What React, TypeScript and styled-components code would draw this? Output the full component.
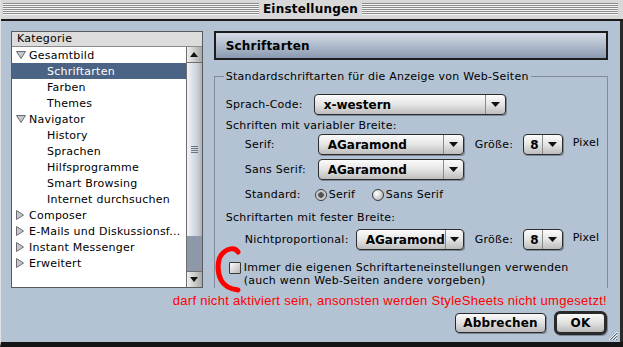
import styled, { createGlobalStyle } from 'styled-components';

const GlobalStyle = createGlobalStyle`
  html, body {
    margin: 0;
    padding: 0;
    background: #b3c3d4;
  }
  * { box-sizing: border-box; }
`;

const uiFont = `"DejaVu Sans", "Noto Sans", sans-serif`;

const Window = styled.div`
  width: 623px;
  height: 347px;
  overflow: hidden;
  position: relative;
  display: flex;
  flex-direction: column;
  background: #b3c3d4;
  border-left: 1px solid #e2e2e2;
  border-bottom: 5px solid #151515;
  font-family: ${uiFont};
  font-size: 11px;
  letter-spacing: 0.25px;
  color: #000;
`;

const TitleBar = styled.div`
  height: 21px;
  flex-shrink: 0;
  display: flex;
  align-items: center;
  padding: 0 5px 2px 2px;
  background: #d8d8d8;
  border-bottom: 2px solid #1a1a1a;
`;

const Stripes = styled.div`
  flex: 1;
  height: 12px;
  background: repeating-linear-gradient(to bottom, #8a8a8a 0 1px, #f6f6f6 1px 2px);
`;

const Title = styled.div`
  padding: 0 4px;
  font-weight: bold;
  font-size: 12px;
  letter-spacing: 0.2px;
`;

const Body = styled.div`
  flex: 1;
  display: flex;
  flex-direction: column;
  padding: 10px 12px 0 10px;
  border-right: 3px solid #2a2a2a;
`;

const MainRow = styled.div`
  display: flex;
  gap: 11px;
  height: 257px;
`;

const ListBox = styled.div`
  width: 192px;
  display: flex;
  flex-direction: column;
  border: 1px solid #5a5a5a;
  background: #fff;
`;

const ListHeader = styled.div`
  height: 15px;
  line-height: 14px;
  padding-left: 5px;
  background: #dcdcdc;
  border-bottom: 1px solid #8a8a8a;
`;

const ListArea = styled.div`
  flex: 1;
  display: flex;
`;

const Rows = styled.div`
  flex: 1;
  min-width: 0;
`;

const Row = styled.div<{ $level: number; $selected?: boolean }>`
  height: 16px;
  display: flex;
  align-items: center;
  padding-left: ${p => (p.$level === 0 ? 4 : 35)}px;
  background: ${p => (p.$selected ? '#4b6384' : 'transparent')};
  color: ${p => (p.$selected ? '#fff' : '#000')};
  white-space: nowrap;
  overflow: hidden;
`;

const Twisty = styled.span`
  width: 13px;
  flex-shrink: 0;
  display: inline-flex;
  justify-content: flex-start;
`;

const ScrollBar = styled.div`
  width: 16px;
  flex-shrink: 0;
  display: flex;
  flex-direction: column;
  border-left: 1px solid #6e6e6e;
`;

const ArrowBox = styled.div<{ $edge: 'top' | 'bottom' }>`
  height: 16px;
  display: flex;
  align-items: center;
  justify-content: center;
  background: linear-gradient(to right, #f0f0f0, #a8a8a8);
  border-${p => (p.$edge === 'top' ? 'bottom' : 'top')}: 1px solid #6e6e6e;
`;

const Thumb = styled.div`
  flex: 0 0 173px;
  display: flex;
  align-items: center;
  justify-content: center;
  background: linear-gradient(to right, #f2f4f7, #c9d0d9 70%, #a9b2bd);
`;

const Track = styled.div`
  flex: 1;
  background: #8d99a8;
`;

const Grip = styled.div`
  width: 7px;
  height: 7px;
  background: repeating-linear-gradient(to bottom, #6b7684 0 1px, transparent 1px 2px);
`;

const RightCol = styled.div`
  width: 395px;
  display: flex;
  flex-direction: column;
  gap: 10px;
`;

const PanelHeader = styled.div`
  height: 29px;
  display: flex;
  align-items: center;
  padding-left: 10px;
  font-size: 12px;
  font-weight: bold;
  letter-spacing: 0.2px;
  border: 2px solid #1c1c1c;
  background: linear-gradient(to bottom, #d3dbe6 0%, #b7c2d1 40%, #8a99b1 100%);
`;

const Group = styled.fieldset`
  flex: 1;
  margin: 0;
  padding: 0;
  min-width: 0;
  border: 1px solid #7f8c9b;
  border-bottom: none;
`;

const Legend = styled.legend`
  margin-left: 9px;
  padding: 0 2px;
  line-height: 13px;
`;

const GroupInner = styled.div`
  padding: 11px 0 0 11px;
  display: flex;
  flex-direction: column;
`;

const FieldRow = styled.div<{ $top: number; $indent?: number }>`
  display: flex;
  align-items: center;
  height: 21px;
  margin-top: ${p => p.$top}px;
  padding-left: ${p => p.$indent ?? 0}px;
  white-space: nowrap;
`;

const Label = styled.span<{ $width: number }>`
  width: ${p => p.$width}px;
  flex-shrink: 0;
`;

const SubHead = styled.div<{ $top: number }>`
  line-height: 14px;
  margin-top: ${p => p.$top}px;
`;

const Select = styled.div<{ $width: number }>`
  width: ${p => p.$width}px;
  height: 21px;
  flex-shrink: 0;
  display: flex;
  border: 1px solid #2c2c2c;
  border-radius: 4px;
  background: linear-gradient(to bottom, #fbfbfb, #e4e4e4 50%, #bdbdbd);
  box-shadow: 1px 1px 0 #7d8896;
  overflow: hidden;
`;

const SelectText = styled.div<{ $right?: boolean }>`
  flex: 1;
  display: flex;
  align-items: center;
  justify-content: ${p => (p.$right ? 'flex-end' : 'flex-start')};
  padding: ${p => (p.$right ? '0 3px 0 0' : '0 0 0 9px')};
  font-weight: bold;
  font-size: 12px;
  letter-spacing: 0;
`;

const SelectArrow = styled.div`
  width: 20px;
  display: flex;
  align-items: center;
  justify-content: center;
  border-left: 1px solid #8a8a8a;
`;

const SizeLabel = styled.span`
  width: 37px;
  flex-shrink: 0;
  margin: 0 11px;
`;

const PixelLabel = styled.span`
  margin-left: 10px;
  align-self: flex-start;
  margin-top: 2px;
`;

const RadioItem = styled.span<{ $width?: number }>`
  display: inline-flex;
  align-items: center;
  width: ${p => (p.$width ? `${p.$width}px` : 'auto')};
`;

const Radio = styled.span<{ $checked?: boolean }>`
  width: 12px;
  height: 12px;
  border-radius: 50%;
  border: 1px solid #3a3a3a;
  background: ${p =>
    p.$checked
      ? 'radial-gradient(circle, #555 0 2.5px, #b8b8b8 3px, #efefef 6px)'
      : 'radial-gradient(circle at 35% 35%, #ffffff, #c4c4c4 70%, #9a9a9a)'};
  margin-right: 2px;
  flex-shrink: 0;
`;

const CheckRow = styled.div`
  display: flex;
  align-items: flex-start;
  margin-top: 11px;
  padding-left: 3px;
  line-height: 13px;
  white-space: nowrap;
`;

const CheckBox = styled.span`
  width: 12px;
  height: 12px;
  margin-top: 1px;
  margin-right: 3px;
  border: 1px solid #3a3a3a;
  border-radius: 1px;
  background: linear-gradient(135deg, #fafafa, #b8b8b8);
  flex-shrink: 0;
`;

const Note = styled.div`
  margin-top: 5px;
  height: 15px;
  line-height: 15px;
  text-align: right;
  padding-right: 1px;
  font-family: "Liberation Sans", Arial, sans-serif;
  font-size: 13px;
  letter-spacing: 0.28px;
  color: #ff0000;
  white-space: nowrap;
`;

const ButtonRow = styled.div`
  margin-top: 3px;
  display: flex;
  justify-content: flex-end;
  align-items: center;
  gap: 8px;
  padding-right: 1px;
`;

const Button = styled.div<{ $default?: boolean; $width: number }>`
  width: ${p => p.$width}px;
  height: ${p => (p.$default ? 24 : 20)}px;
  display: flex;
  align-items: center;
  justify-content: center;
  font-weight: bold;
  font-size: 12px;
  letter-spacing: 0.2px;
  border: ${p => (p.$default ? '3px' : '1px')} solid #2a2a2a;
  border-radius: ${p => (p.$default ? 6 : 4)}px;
  background: linear-gradient(to bottom, #fafafa, #e0e0e0 50%, #b9b9b9);
  box-shadow: 1px 1px 0 #7d8896;
`;

const Mark = styled.svg`
  position: absolute;
  left: 212px;
  top: 244px;
  pointer-events: none;
`;

const ResizeGrip = styled.svg`
  position: absolute;
  right: 5px;
  bottom: 1px;
`;

const DownTri = () => (
  <svg width="10" height="8" viewBox="0 0 10 8">
    <path d="M0.5 0.5 H9.5 L5 7.5 Z" fill="#c4c8d0" stroke="#6a6a6a" />
  </svg>
);

const RightTri = () => (
  <svg width="8" height="10" viewBox="0 0 8 10">
    <path d="M0.5 0.5 V9.5 L7.5 5 Z" fill="#c4c8d0" stroke="#6a6a6a" />
  </svg>
);

const SmallArrow = ({ up }: { up?: boolean }) => (
  <svg width="8" height="5" viewBox="0 0 8 5">
    <path d={up ? 'M0 5 L4 0 L8 5 Z' : 'M0 0 H8 L4 5 Z'} fill="#111" />
  </svg>
);

const PopArrow = () => (
  <svg width="9" height="5" viewBox="0 0 9 5">
    <path d="M0 0 H9 L4.5 5 Z" fill="#111" />
  </svg>
);

type Item = { label: string; level: number; open?: boolean; selected?: boolean };

const items: Item[] = [
  { label: 'Gesamtbild', level: 0, open: true },
  { label: 'Schriftarten', level: 1, selected: true },
  { label: 'Farben', level: 1 },
  { label: 'Themes', level: 1 },
  { label: 'Navigator', level: 0, open: true },
  { label: 'History', level: 1 },
  { label: 'Sprachen', level: 1 },
  { label: 'Hilfsprogramme', level: 1 },
  { label: 'Smart Browsing', level: 1 },
  { label: 'Internet durchsuchen', level: 1 },
  { label: 'Composer', level: 0 },
  { label: 'E-Mails und Diskussionsf...', level: 0 },
  { label: 'Instant Messenger', level: 0 },
  { label: 'Erweitert', level: 0 },
];

const Popup = ({ width, value, right }: { width: number; value: string; right?: boolean }) => (
  <Select $width={width}>
    <SelectText $right={right}>{value}</SelectText>
    <SelectArrow>
      <PopArrow />
    </SelectArrow>
  </Select>
);

export default function App() {
  return (
    <>
      <GlobalStyle />
      <Window>
        <TitleBar>
          <Stripes />
          <Title>Einstellungen</Title>
          <Stripes />
        </TitleBar>
        <Body>
          <MainRow>
            <ListBox>
              <ListHeader>Kategorie</ListHeader>
              <ListArea>
                <Rows>
                  {items.map(it => (
                    <Row key={it.label} $level={it.level} $selected={it.selected}>
                      {it.level === 0 && <Twisty>{it.open ? <DownTri /> : <RightTri />}</Twisty>}
                      {it.label}
                    </Row>
                  ))}
                </Rows>
                <ScrollBar>
                  <ArrowBox $edge="top">
                    <SmallArrow up />
                  </ArrowBox>
                  <Thumb>
                    <Grip />
                  </Thumb>
                  <Track />
                  <ArrowBox $edge="bottom">
                    <SmallArrow />
                  </ArrowBox>
                </ScrollBar>
              </ListArea>
            </ListBox>
            <RightCol>
              <PanelHeader>Schriftarten</PanelHeader>
              <Group>
                <Legend>Standardschriftarten für die Anzeige von Web-Seiten</Legend>
                <GroupInner>
                  <FieldRow $top={0}>
                    <Label $width={88}>Sprach-Code:</Label>
                    <Popup width={192} value="x-western" />
                  </FieldRow>
                  <SubHead $top={4}>Schriften mit variabler Breite:</SubHead>
                  <FieldRow $top={1} $indent={19}>
                    <Label $width={73}>Serif:</Label>
                    <Popup width={146} value="AGaramond" />
                    <SizeLabel>Größe:</SizeLabel>
                    <Popup width={40} value="8" right />
                    <PixelLabel>Pixel</PixelLabel>
                  </FieldRow>
                  <FieldRow $top={4} $indent={19}>
                    <Label $width={73}>Sans Serif:</Label>
                    <Popup width={146} value="AGaramond" />
                  </FieldRow>
                  <FieldRow $top={4} $indent={19}>
                    <Label $width={70}>Standard:</Label>
                    <RadioItem $width={57}>
                      <Radio $checked />
                      Serif
                    </RadioItem>
                    <RadioItem>
                      <Radio />
                      Sans Serif
                    </RadioItem>
                  </FieldRow>
                  <SubHead $top={6}>Schriftarten mit fester Breite:</SubHead>
                  <FieldRow $top={4} $indent={19}>
                    <Label $width={111}>Nichtproportional:</Label>
                    <Popup width={108} value="AGaramond" />
                    <SizeLabel>Größe:</SizeLabel>
                    <Popup width={40} value="8" right />
                    <PixelLabel>Pixel</PixelLabel>
                  </FieldRow>
                  <CheckRow>
                    <CheckBox />
                    <span>
                      Immer die eigenen Schriftarteneinstellungen verwenden
                      <br />
                      (auch wenn Web-Seiten andere vorgeben)
                    </span>
                  </CheckRow>
                </GroupInner>
              </Group>
            </RightCol>
          </MainRow>
          <Note>darf nicht aktiviert sein, ansonsten werden StyleSheets nicht umgesetzt!</Note>
          <ButtonRow>
            <Button $width={91}>Abbrechen</Button>
            <Button $width={53} $default>
              OK
            </Button>
          </ButtonRow>
        </Body>
        <Mark width="34" height="50" viewBox="0 0 34 50">
          <path
            d="M25 8 C22 3, 14 4, 9 10 C4 16, 4 28, 8 36 C11 42, 18 45, 25 46"
            fill="none"
            stroke="#ff0000"
            strokeWidth="5"
            strokeLinecap="round"
          />
        </Mark>
        <ResizeGrip width="11" height="11" viewBox="0 0 11 11">
          <path d="M10 2 L2 10 M10 5 L5 10 M10 8 L8 10" stroke="#ffffff" strokeWidth="1" />
          <path d="M10 3 L3 10 M10 6 L6 10 M10 9 L9 10" stroke="#5a6470" strokeWidth="1" />
        </ResizeGrip>
      </Window>
    </>
  );
}
